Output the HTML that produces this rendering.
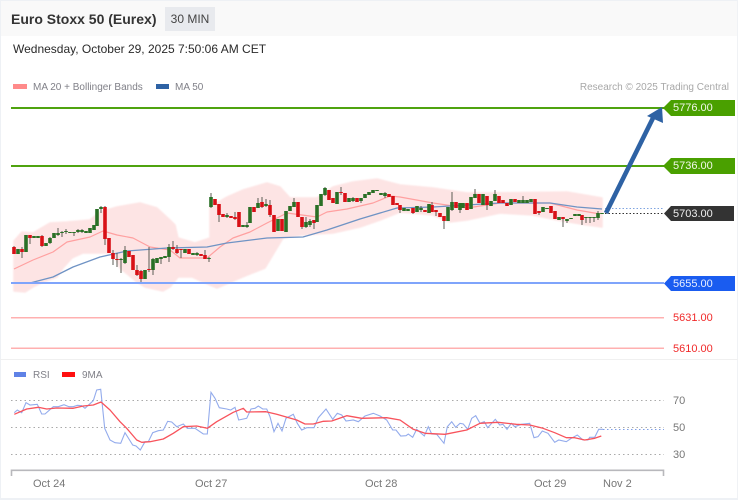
<!DOCTYPE html>
<html><head><meta charset="utf-8"><style>
html,body{margin:0;padding:0;background:#fff}
body{width:738px;height:500px;overflow:hidden;position:relative;font-family:"Liberation Sans",sans-serif}
svg{position:absolute;left:0;top:0}
text{font-family:"Liberation Sans",sans-serif}
</style></head><body>
<svg width="738" height="500" viewBox="0 0 738 500">
<defs><filter id="b" x="-5%" y="-5%" width="110%" height="110%"><feGaussianBlur stdDeviation="0.8"/></filter></defs>
<rect width="738" height="500" fill="#fff"/>
<rect x="0" y="0" width="738" height="36" fill="#f9f9f9"/>
<rect x="0" y="0" width="738" height="1" fill="#eef1f5"/>
<rect x="0" y="0" width="1" height="500" fill="#eef1f5"/>
<rect x="737" y="0" width="1" height="500" fill="#f0f2f5"/>
<rect x="0" y="498" width="738" height="2" fill="#eef1f5"/>
<rect x="0" y="359" width="738" height="1" fill="#f0f0f0"/>
<text x="11" y="24" font-size="14" font-weight="bold" fill="#333">Euro Stoxx 50 (Eurex)</text>
<rect x="165" y="7" width="50" height="24" fill="#e8eaee"/>
<text x="190" y="23" font-size="12" fill="#444" text-anchor="middle">30 MIN</text>
<text x="13" y="53" font-size="12" fill="#2a2a2a">Wednesday, October 29, 2025 7:50:06 AM CET</text>
<rect x="13" y="84" width="14" height="5" fill="#ff8a8a"/>
<text x="33" y="90" font-size="10" fill="#808088">MA 20 + Bollinger Bands</text>
<rect x="156" y="84" width="13" height="5" fill="#2e62a4"/>
<text x="175" y="90" font-size="10" fill="#808088">MA 50</text>
<text x="729" y="90" font-size="10" fill="#a8a8a8" text-anchor="end">Research © 2025 Trading Central</text>

<path fill="#fde4e4" stroke="#fde4e4" stroke-width="1.5" stroke-linejoin="round" filter="url(#b)" d="M14 241L22 232 33 233 50 223 67 222 90 220 100 212 117 207 140 203 157 208 170 220 175 225 178 238 195 243 210 238 210 207 227 197 243 190 267 183 280 187 290 198 317 198 333 187 353 182 377 179 400 185 433 188 467 193 483 193 567 192 602 198 602 227 587 225 557 220 533 215 500 213 467 220 450 222 433 215 400 212 380 220 360 227 333 233 300 235 283 238 265 268 240 278 217 288 210 285 192 277 178 277 170 287 163 291 145 287 137 282 120 268 113 253 83 253 72 258 63 268 57 277 43 282 33 287 25 292 14 291Z"/>

<path fill="none" stroke="#ffa0a0" stroke-width="1.2" stroke-linejoin="round" d="M14 269L33 260 53 252 67 242 90 237 103 231 117 235 133 238 150 247 170 250 180 258 207 258 220 247 233 238 250 232 267 223 287 213 317 217 327 212 347 209 373 203 390 196 400 197 433 203 467 208 500 203 533 203 550 203 577 210 600 214"/>
<path fill="none" stroke="#6f93c4" stroke-width="1.3" stroke-linejoin="round" d="M12 283L30 283 53 277 73 267 100 257 127 251 167 248 207 247 227 243 267 238 303 237 327 230 360 219 397 208 433 207 500 203 550 203 577 207 602 209"/>

<path fill="none" stroke="#5c5c54" stroke-width="1" d="M14 246V254M22 247V258M30 235V244M42 235V247M50 237V244M58 228V236M62 231V237M66 229V234M74 232V236M78 229V233M82 229V233M101 206V213M105 206V245M113 250V265M117 253V267M121 258V273M125 246V264M137 265V276M141 270V283M149 247V272M153 258V275M161 257V264M169 244V262M173 241V250M177 245V254M181 249V258M197 252V256M205 250V259M209 257V262M211 193V208M219 204V222M227 213V218M235 212V220M247 222V228M258 198V208M262 197V208M266 199V207M270 200V217M294 198V207M302 217V229M306 217V228M310 219V227M314 220V229M325 187V196M341 187V195M353 197V202M361 198V203M385 192V198M400 205V213M413 208V214M421 206V212M432 202V212M436 210V216M444 216V229M452 192V211M460 203V213M475 189V198M487 196V210M495 190V201M523 196V203M539 211V215M563 217V227M567 219V223M582 215V225M586 217V223M590 217V223M594 217V222M598 211V220"/>
<path fill="none" stroke="#d81016" stroke-width="3.6" d="M14 247V254M22 249V252M30 235V238M42 236V246M105 207V239M109 238V253M113 253V259M117 259V260M129 251V257M133 255V270M137 270V275M141 271V279M149 269V270M173 247V249M177 249V253M181 249V250M189 249V254M201 254V256M205 255V259M215 199V205M219 204V215M223 214V217M231 216V218M235 217V219M239 212V227M254 207V212M262 202V207M270 205V215M274 215V232M282 219V231M298 202V217M302 217V227M314 220V223M329 190V200M333 198V203M341 192V193M345 193V202M357 198V202M389 194V197M393 196V205M397 203V205M400 205V210M413 208V213M425 210V212M432 205V212M436 210V212M440 213V217M444 216V221M456 202V208M467 203V210M479 194V203M487 196V205M499 196V203M503 200V203M507 203V206M515 199V202M535 199V214M539 211V213M551 206V213M555 211V219M563 217V219M582 215V220"/>
<path fill="none" stroke="#2a7026" stroke-width="3.6" d="M18 249V254M26 235V252M34 236V238M38 236V238M46 243V246M50 238V243M54 233V238M58 233V235M62 232V233M66 231V232M70 232V233M74 232V233M78 230V232M82 230V232M86 231V233M90 228V233M94 225V230M97 209V226M101 207V209M121 259V260M125 250V263M145 270V279M153 259V270M157 258V263M161 257V259M165 256V258M169 247V257M185 249V253M193 253V255M197 253V255M209 258V259M211 197V207M227 215V217M243 225V227M247 225V227M250 207V223M258 203V208M266 204V206M278 219V231M286 211V232M290 206V211M294 202V207M306 222V227M310 221V225M317 205V222M321 194V206M325 188V195M337 192V204M349 198V202M353 198V201M361 198V201M365 194V198M369 192V195M373 190V193M377 190V191M381 193V195M385 193V196M404 208V211M408 209V211M417 206V212M421 208V210M429 204V213M448 207V221M452 202V210M460 203V210M463 203V208M471 197V209M475 194V198M483 194V205M491 201V206M495 194V201M511 199V205M519 200V203M523 200V203M527 200V203M531 199V202M543 207V212M547 208V209M559 217V220M567 219V221M571 218V219M575 214V216M579 214V216M586 217V218M590 217V218M594 217V218M598 213V218M602 213V214"/>

<rect x="11" y="107" width="653" height="2" fill="#4fa30f"/>
<rect x="11" y="165" width="653" height="2" fill="#4fa30f"/>
<rect x="11" y="282" width="653" height="2" fill="#7fa4fb"/>
<rect x="11" y="317" width="653" height="1.5" fill="#ffb0b0"/>
<rect x="11" y="347.5" width="653" height="1.5" fill="#ffb0b0"/>
<path stroke="#7fa4e0" stroke-width="1" stroke-dasharray="1.5 2" d="M605 208.5H664"/>
<path stroke="#333" stroke-width="1" stroke-dasharray="1.5 2" d="M605 213.5H664"/>

<path fill="#4aa000" d="M671 100H735V116H671L663 108Z"/>
<path fill="#4aa000" d="M671 158H735V174H671L663 166Z"/>
<path fill="#333" d="M671 206H734V221H671L664 213.5Z"/>
<path fill="#1a5cf0" d="M671 276H735V291H671L664 283.5Z"/>
<text x="673" y="111" font-size="11" fill="#f2f7ea">5776.00</text>
<text x="673" y="169" font-size="11" fill="#f2f7ea">5736.00</text>
<text x="673" y="217" font-size="11" fill="#eee">5703.00</text>
<text x="673" y="287" font-size="11" fill="#e8eeff">5655.00</text>
<text x="673" y="321" font-size="11" fill="#f02a2a">5631.00</text>
<text x="673" y="352" font-size="11" fill="#f02a2a">5610.00</text>

<path d="M606 213L654 116" stroke="#2e62a4" stroke-width="4.6" fill="none"/>
<path d="M662 107L647 116 663 123Z" fill="#2e62a4"/>

<rect x="14" y="372" width="12" height="5" fill="#5f82e6"/>
<text x="33" y="378" font-size="10" fill="#808088">RSI</text>
<rect x="62" y="372" width="13" height="5" fill="#ff1010"/>
<text x="82" y="378" font-size="10" fill="#808088">9MA</text>

<path stroke="#aaa" stroke-width="1" stroke-dasharray="1.5 3" d="M11 400.5H664M11 427.5H664M11 454.5H664"/>
<path fill="none" stroke="#b8b8bc" stroke-width="1.6" d="M11.5 476V470.3H663.5V476"/>
<text x="673" y="404" font-size="11" fill="#777">70</text>
<text x="673" y="431" font-size="11" fill="#777">50</text>
<text x="673" y="458" font-size="11" fill="#777">30</text>
<text x="33" y="487" font-size="11" fill="#777">Oct 24</text>
<text x="195" y="487" font-size="11" fill="#777">Oct 27</text>
<text x="365" y="487" font-size="11" fill="#777">Oct 28</text>
<text x="534" y="487" font-size="11" fill="#777">Oct 29</text>
<text x="603" y="487" font-size="11" fill="#777">Nov 2</text>

<path fill="none" stroke="#93abec" stroke-width="1.1" d="M14.3 412.7L17.3 410 21.7 412.7 26 402.7 30 405 37.3 404.3 41.7 414 45 414 53.3 406.7 58.3 406.7 64 404.7 69 406.7 73.3 406.7 77.3 405.3 81.7 405.7 85 408.3 93.3 400.7 96.7 390 100.7 389.3 104.7 428.3 110 440 115 442.7 120.7 443.3 125 432.7 132.7 445 136 446 140.3 450 145 441.7 148.3 441.7 152.7 432.7 158.3 430.7 163.3 430 167.7 421.3 171.7 422 176.7 426.7 183.3 424 187.3 428.3 195 428.3 203.3 434 207.3 434 211 392.3 215 398.3 219.3 407.7 226.7 409 230.7 410 235 407.3 238.7 420 246.7 418.3 251 409 255 408.3 258.3 406 262.7 409 266.7 409 270 416.7 274 431.7 278 423.3 282 431 286 418.3 293.3 414.3 297.3 423.3 301.7 430 306.7 427.7 314 427.7 318.3 417.7 326 409 332.7 419.3 337.3 413.3 341.7 415 346 421 353.3 420 358.3 421.7 365 416 373.3 413.3 380 416 386.7 420 392.7 430 396 430 400.7 436 406 435.7 408.3 434 412.7 437.3 416.7 429.3 424.3 436 428.3 426.7 431.7 434 436.7 434.3 444 443.3 447.3 426.7 451.7 421.7 455.7 427.3 460 423.3 463.3 424 467.7 429.3 471.7 418.3 475.7 415.7 480 423.3 484.3 421.7 487.7 427.7 495.3 419.3 499.7 425 503 424.3 507 429.3 511.3 423.3 514.7 426.7 521.3 424.3 529.7 423.3 534 437.7 538 436.7 542.3 431 548 433.3 554.7 442.3 558.7 440 566.3 441.7 571.3 438.3 577.3 435 583 440 588 440 589.7 437.3 594.7 437.3 598.7 429.3 603 429.3"/>
<path stroke="#7f9fe8" stroke-width="1" stroke-dasharray="1.5 2.5" d="M603 429.5H664"/>
<path fill="none" stroke="#f8535c" stroke-width="1.3" stroke-linejoin="round" d="M14.3 414.3L26.7 409 38.3 407.3 46.7 409 56.7 408 73.3 408.3 83.3 406 93.3 405 101 402 110 410 120 421.7 126.7 428.3 136.7 440 141.7 442.3 150 441.7 163.3 439 173.3 433.3 183.3 426.7 196.7 426 207.3 428.3 216.7 421.7 233.3 412.3 243.3 408.3 246.7 412 266 411.7 276.7 414.3 296.7 420 305 424 313.3 424 323.3 421.3 331.7 421 346.7 415.7 361.7 418.3 386.7 417.7 400 420 413.3 429.3 425 433.3 445 434.3 466.7 430 480 423.3 498 422.3 516.3 424.3 529.7 425 543 428.3 554.7 432.7 566.3 437.7 574.7 437.7 584.7 440 594.7 438.3 601.3 436"/>
</svg>
</body></html>
